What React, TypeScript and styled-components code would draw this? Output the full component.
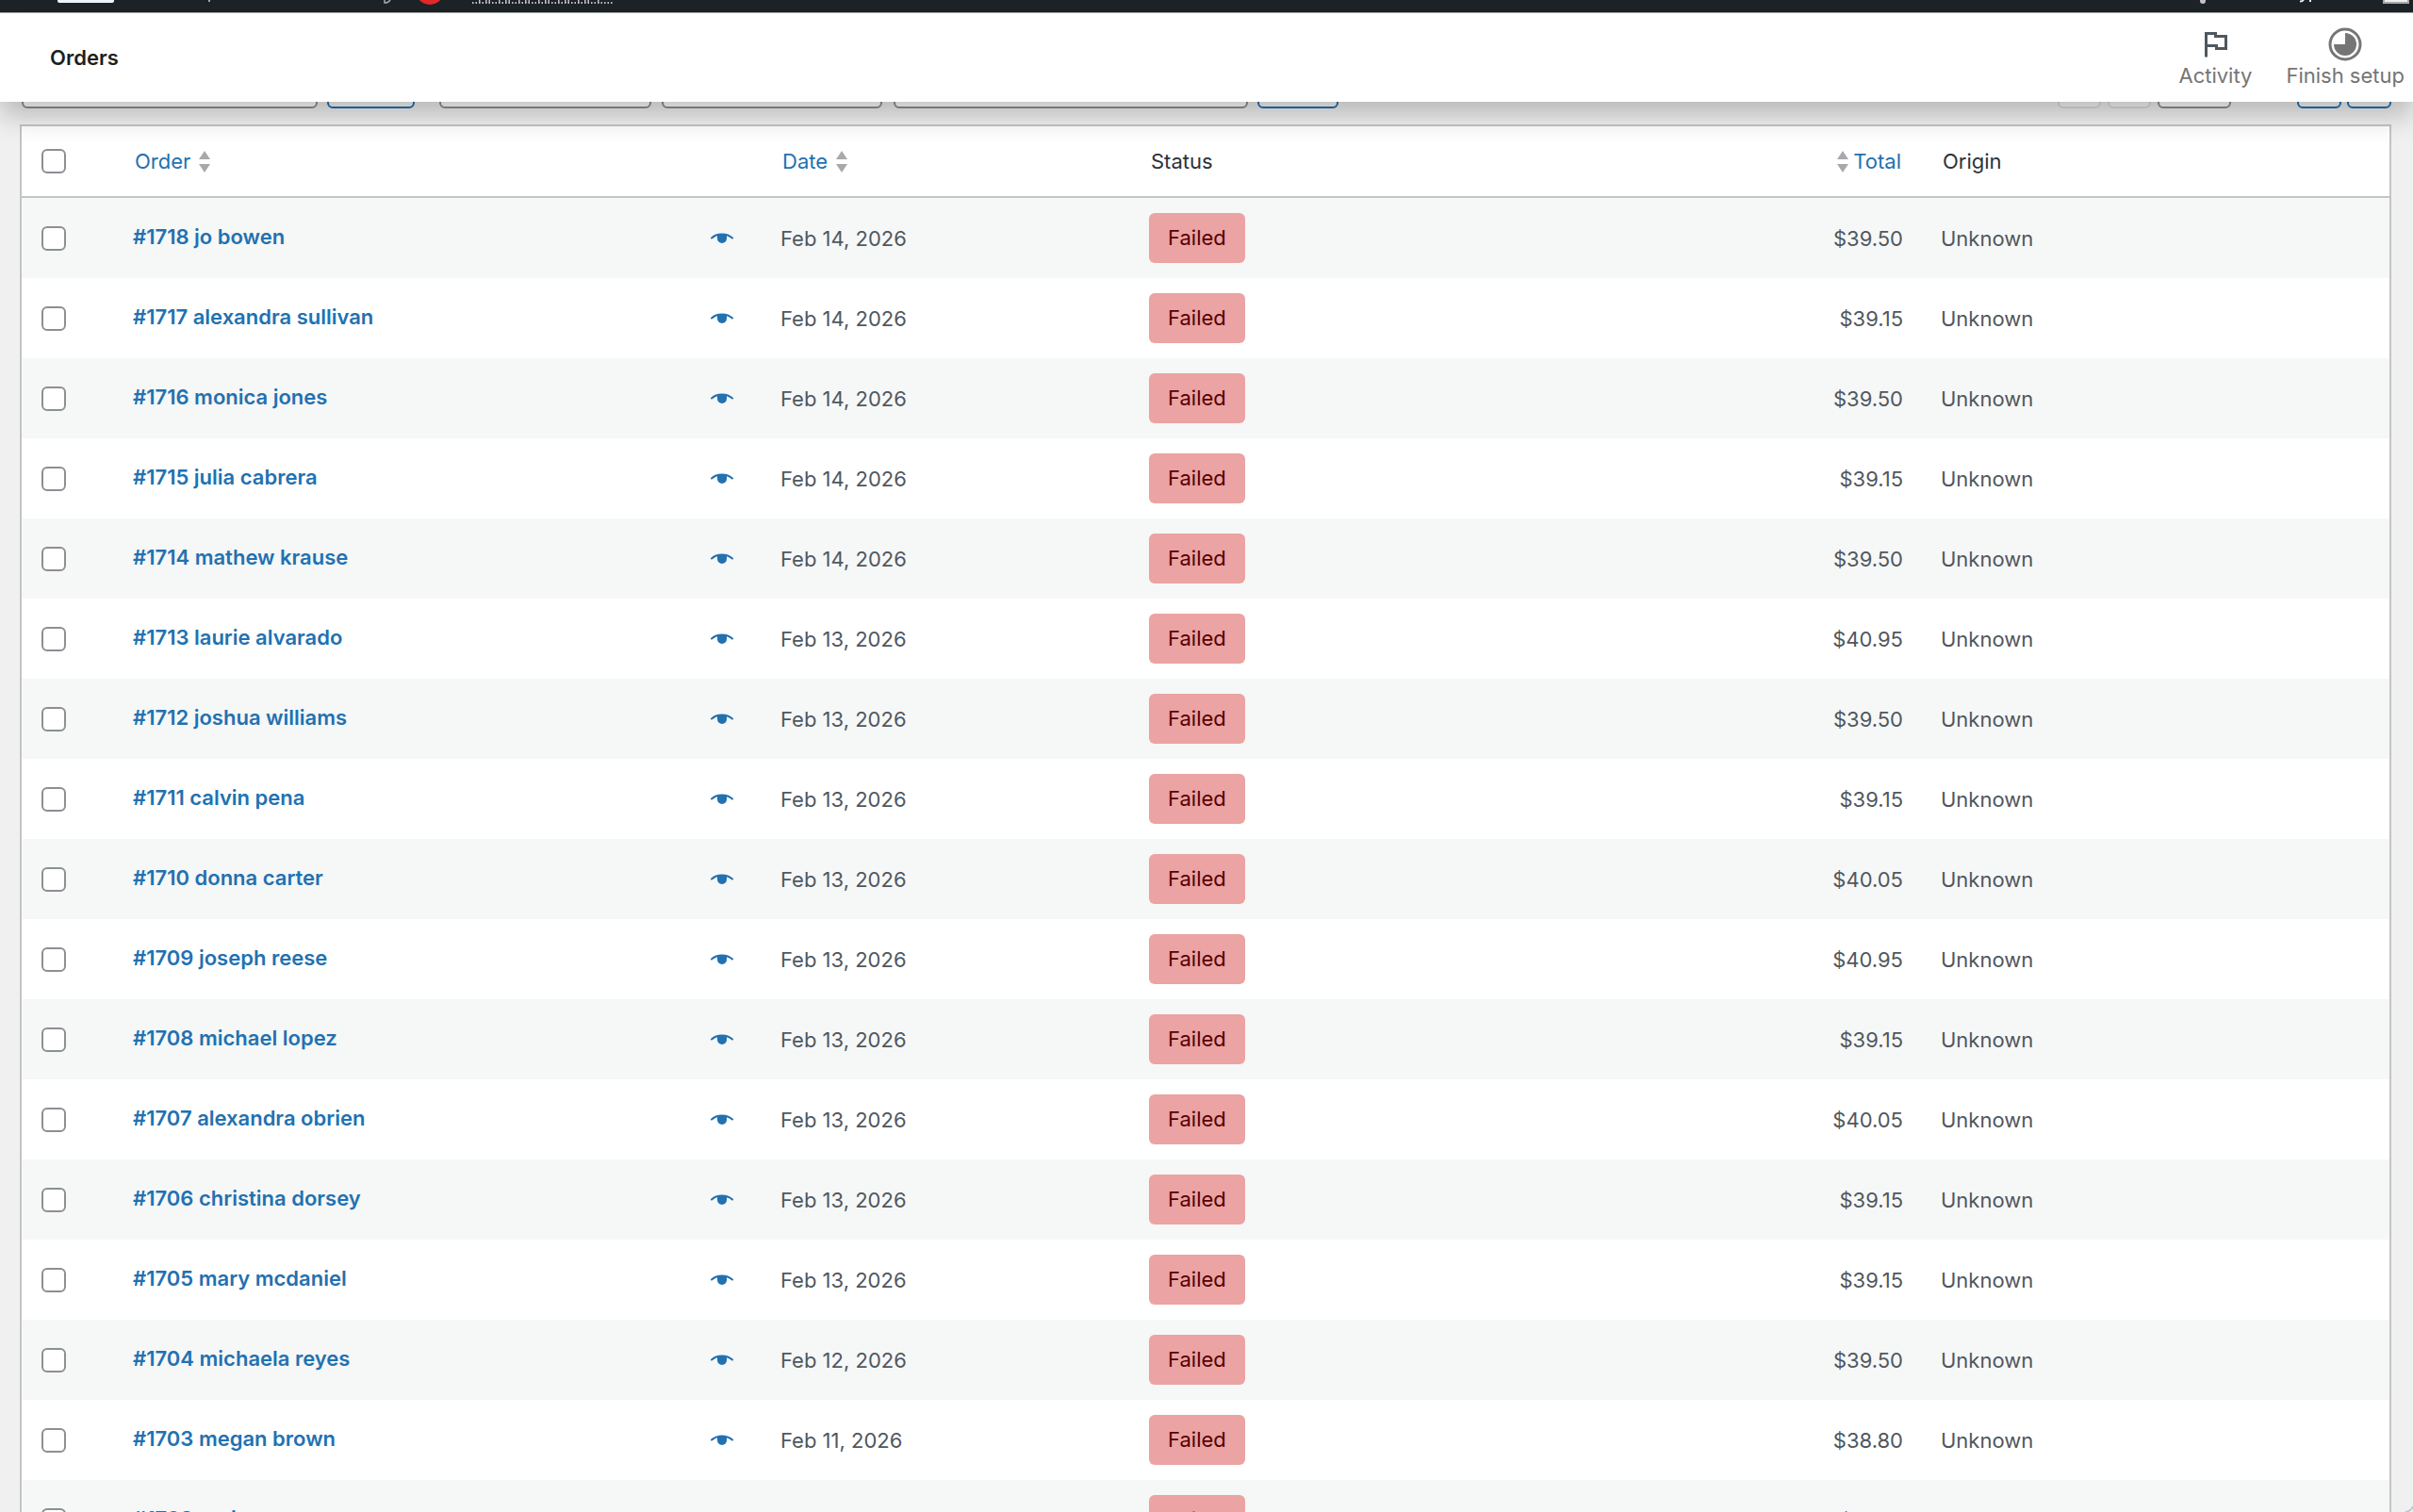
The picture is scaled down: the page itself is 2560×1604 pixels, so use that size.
import React from "react";
import styled, { createGlobalStyle } from "styled-components";

const GlobalStyle = createGlobalStyle`
  *, *::before, *::after { box-sizing: border-box; }
  html, body, #root { height: 100%; }
  body {
    margin: 0;
    overflow: hidden;
    background: #f0f0f1;
    color: #2c3338;
    font-family: Inter, "Liberation Sans", sans-serif;
    font-size: 22px;
    line-height: 30px;
  }
  a { color: #2271b1; text-decoration: none; }
  button, input, select { font: inherit; }
`;

const Screen = styled.div`
  position: relative;
  height: 100vh;
  overflow: hidden;
`;

const AdminBar = styled.div`
  display: flex;
  align-items: flex-end;
  justify-content: space-between;
  height: 13px;
  background: #1d2327;
`;

const BarArt = styled.svg`
  display: block;
  height: 13px;
`;

const Header = styled.header`
  position: relative;
  z-index: 2;
  display: flex;
  align-items: center;
  justify-content: space-between;
  height: 95px;
  padding: 0 9px 0 53px;
  border-top: 1px solid #a7aaad;
  background: #fff;
  box-shadow: 0 14px 28px rgba(0, 0, 0, 0.24);
`;

const Title = styled.h1`
  margin: 0;
  color: #1e1e1e;
  font-size: 22px;
  font-weight: 600;
  line-height: 30px;
`;

const Actions = styled.div`
  display: flex;
  gap: 36px;
  padding-top: 2px;
`;

const Action = styled.button`
  display: flex;
  flex-direction: column;
  align-items: center;
  padding: 0;
  border: 0;
  background: none;
  color: #757575;
  line-height: 30px;

  svg { display: block; width: 36px; height: 36px; }
`;

const Filters = styled.div`
  display: flex;
  justify-content: space-between;
  height: 24px;
  padding: 0 23px;
`;

const FilterGroup = styled.div`
  display: flex;
  align-items: flex-end;
  height: 7px;
`;

const controlStyle = (width: number, gap: number, tone: string) => `
  flex: none;
  width: ${width}px;
  height: 52px;
  margin: 0 0 0 ${gap}px;
  padding: 0;
  border: 2px solid ${tone};
  border-radius: 6px;
`;

interface ControlProps {
  $width: number;
  $gap: number;
}

const Select = styled.select<ControlProps>`
  appearance: none;
  ${(p) => controlStyle(p.$width, p.$gap, "#8c8f94")}
  background: #fff;
`;

const Field = styled.input<ControlProps>`
  ${(p) => controlStyle(p.$width, p.$gap, "#8c8f94")}
  background: #fff;
`;

const Button = styled.button<ControlProps>`
  ${(p) => controlStyle(p.$width, p.$gap, "#2271b1")}
  background: #f6f7f7;
  &:disabled { border-color: #dcdcde; }
`;

const Table = styled.table`
  width: calc(100% - 44px);
  margin: 0 23px 0 21px;
  border: 2px solid #c3c4c7;
  border-spacing: 0;
  table-layout: fixed;
  background: #fff;
`;

const Col = styled.col<{ $share?: string }>`
  width: ${(p) => p.$share ?? "auto"};
`;

const HeadCell = styled.th<{ $right?: boolean }>`
  height: 76px;
  padding: 0 ${(p) => (p.$right ? 28 : 16)}px 0 16px;
  border-bottom: 2px solid #c3c4c7;
  font-weight: 400;
  text-align: ${(p) => (p.$right ? "right" : "left")};
`;

const Row = styled.tr`
  &:nth-child(odd) { background: #f6f7f7; }
`;

const Cell = styled.td<{ $right?: boolean }>`
  height: 85px;
  padding: 0 ${(p) => (p.$right ? 26 : 14)}px 0 14px;
  color: #50575e;
  text-align: ${(p) => (p.$right ? "right" : "left")};
`;

const TickHeadCell = styled(HeadCell)`
  padding: 0 14px;
`;

const SortLink = styled.a<{ $right?: boolean }>`
  display: flex;
  align-items: center;
  justify-content: ${(p) => (p.$right ? "flex-end" : "flex-start")};
  gap: ${(p) => (p.$right ? 4 : 8)}px;
  svg { display: block; width: 14px; height: 24px; }
`;

const Tick = styled.input`
  appearance: none;
  display: block;
  width: 26px;
  height: 26px;
  margin: 0 0 0 7px;
  border: 2px solid #8c8f94;
  border-radius: 6px;
  background: #fff;
`;

const OrderLine = styled.div`
  display: flex;
  align-items: center;
  justify-content: space-between;
  padding-right: 22px;
`;

const OrderLink = styled.a`
  padding-bottom: 3px;
  font-weight: 600;
`;

const Preview = styled.button`
  padding: 0;
  border: 0;
  background: none;
  svg { display: block; width: 24px; height: 12px; }
`;

const Badge = styled.mark`
  display: inline-block;
  padding: 11px 20px 12px;
  border-radius: 6px;
  background: #eba3a3;
  color: #570000;
  vertical-align: middle;
`;

const Corner = styled.svg`
  position: absolute;
  right: 0;
  bottom: 0;
  width: 10px;
  height: 8px;
`;

const orders: [number, string, string, string][] = [
  [1718, "jo bowen", "Feb 14, 2026", "$39.50"],
  [1717, "alexandra sullivan", "Feb 14, 2026", "$39.15"],
  [1716, "monica jones", "Feb 14, 2026", "$39.50"],
  [1715, "julia cabrera", "Feb 14, 2026", "$39.15"],
  [1714, "mathew krause", "Feb 14, 2026", "$39.50"],
  [1713, "laurie alvarado", "Feb 13, 2026", "$40.95"],
  [1712, "joshua williams", "Feb 13, 2026", "$39.50"],
  [1711, "calvin pena", "Feb 13, 2026", "$39.15"],
  [1710, "donna carter", "Feb 13, 2026", "$40.05"],
  [1709, "joseph reese", "Feb 13, 2026", "$40.95"],
  [1708, "michael lopez", "Feb 13, 2026", "$39.15"],
  [1707, "alexandra obrien", "Feb 13, 2026", "$40.05"],
  [1706, "christina dorsey", "Feb 13, 2026", "$39.15"],
  [1705, "mary mcdaniel", "Feb 13, 2026", "$39.15"],
  [1704, "michaela reyes", "Feb 12, 2026", "$39.50"],
  [1703, "megan brown", "Feb 11, 2026", "$38.80"],
  [1702, "tonia t", "Feb 11, 2026", "$39.15"],
];

const SortIcon = () => (
  <svg viewBox="0 0 14 24" fill="#a7aaad" aria-hidden="true">
    <path d="M7 1l6 9H1zM7 24l-6-9h12z" />
  </svg>
);

const EyeIcon = () => (
  <svg viewBox="0 0 24 12" aria-hidden="true">
    <path d="M1 5.500C7 0 17 0 23 5.500" fill="none" stroke="#2271b1" strokeWidth="2" strokeLinecap="round" />
    <path d="M7 2.500C10 1 14 1 17 2.500V6a5 5 0 0 1-10 0z" fill="#2271b1" />
  </svg>
);

export default function App() {
  return (
    <Screen>
      <GlobalStyle />
      <AdminBar>
        <BarArt width="660" viewBox="0 0 660 13" aria-hidden="true">
          <path d="M61 0h60v1a2 2 0 0 1-2 2H63a2 2 0 0 1-2-2z" fill="#f0f6fc" />
          <path d="M222 0v2" stroke="#a7aaad" strokeWidth="2" />
          <path d="M408 0v3q4 0 6-3" fill="none" stroke="#a7aaad" strokeWidth="1.500" />
          <circle cx="456" cy="-10" r="15" fill="#e02b2b" />
          <path d="M501 3h150" stroke="#c3c4c7" strokeWidth="2" strokeDasharray="1.500 2" />
          <path d="M508 1.500h130" stroke="#c3c4c7" strokeWidth="3" strokeDasharray="1.500 5.500 1.500 2 1.500 9" />
        </BarArt>
        <BarArt width="260" viewBox="0 0 260 13" aria-hidden="true">
          <circle cx="37" cy="1" r="3" fill="#c3c4c7" />
          <path d="M140 1.500q3 0 4-2M151 0v2" fill="none" stroke="#f0f0f1" strokeWidth="2" />
          <path d="M228 0h28v4h-28z" fill="#a7aaad" />
          <path d="M230 0h24v2h-24z" fill="#f0f0f1" />
        </BarArt>
      </AdminBar>
      <Header>
        <Title>Orders</Title>
        <Actions>
          <Action type="button">
            <svg viewBox="0 0 36 36" fill="none" stroke="#50575e" strokeWidth="3" aria-hidden="true">
              <path d="M8.500 31.500V6.500H18.500V9.500H29.500V22.500H19.500V19.500H8.500" />
            </svg>
            Activity
          </Action>
          <Action type="button">
            <svg viewBox="0 0 36 36" aria-hidden="true">
              <circle cx="18" cy="18" r="16" fill="none" stroke="#757575" strokeWidth="3" />
              <path d="M18 18V6a12 12 0 1 1-12 12z" fill="#757575" />
            </svg>
            Finish setup
          </Action>
        </Actions>
      </Header>
      <Filters>
        <FilterGroup>
          <Select $width={314} $gap={0} aria-label="Bulk actions" />
          <Button $width={93} $gap={10} type="button" aria-label="Apply" />
          <Select $width={225} $gap={26} aria-label="Dates" />
          <Select $width={234} $gap={11} aria-label="Sales channels" />
          <Field $width={376} $gap={12} aria-label="Customer" />
          <Button $width={86} $gap={10} type="button" aria-label="Filter" />
        </FilterGroup>
        <FilterGroup>
          <Button $width={46} $gap={0} type="button" disabled aria-label="First page" />
          <Button $width={46} $gap={7} type="button" disabled aria-label="Previous page" />
          <Field $width={78} $gap={7} aria-label="Current page" />
          <Button $width={47} $gap={70} type="button" aria-label="Next page" />
          <Button $width={47} $gap={6} type="button" aria-label="Last page" />
        </FilterGroup>
      </Filters>
      <Table>
        <colgroup>
          <Col $share="104px" />
          <Col $share="687px" />
          <Col $share="391px" />
          <Col $share="450px" />
          <Col $share="390px" />
          <Col />
        </colgroup>
        <thead>
          <tr>
            <TickHeadCell><Tick type="checkbox" aria-label="Select all" /></TickHeadCell>
            <HeadCell><SortLink href="#order">Order<SortIcon /></SortLink></HeadCell>
            <HeadCell><SortLink href="#date">Date<SortIcon /></SortLink></HeadCell>
            <HeadCell>Status</HeadCell>
            <HeadCell $right><SortLink $right href="#total"><SortIcon />Total</SortLink></HeadCell>
            <HeadCell>Origin</HeadCell>
          </tr>
        </thead>
        <tbody>
          {orders.map(([id, name, date, total]) => (
            <Row key={id}>
              <Cell><Tick type="checkbox" aria-label={`Select order ${id}`} /></Cell>
              <Cell>
                <OrderLine>
                  <OrderLink href={`#${id}`}>#{id} {name}</OrderLink>
                  <Preview type="button" aria-label="Preview"><EyeIcon /></Preview>
                </OrderLine>
              </Cell>
              <Cell>{date}</Cell>
              <Cell><Badge>Failed</Badge></Cell>
              <Cell $right>{total}</Cell>
              <Cell>Unknown</Cell>
            </Row>
          ))}
        </tbody>
      </Table>
      <Corner viewBox="0 0 10 8" aria-hidden="true">
        <path d="M2 8q6-1 8-6" fill="none" stroke="#c3c4c7" strokeWidth="2" />
      </Corner>
    </Screen>
  );
}
